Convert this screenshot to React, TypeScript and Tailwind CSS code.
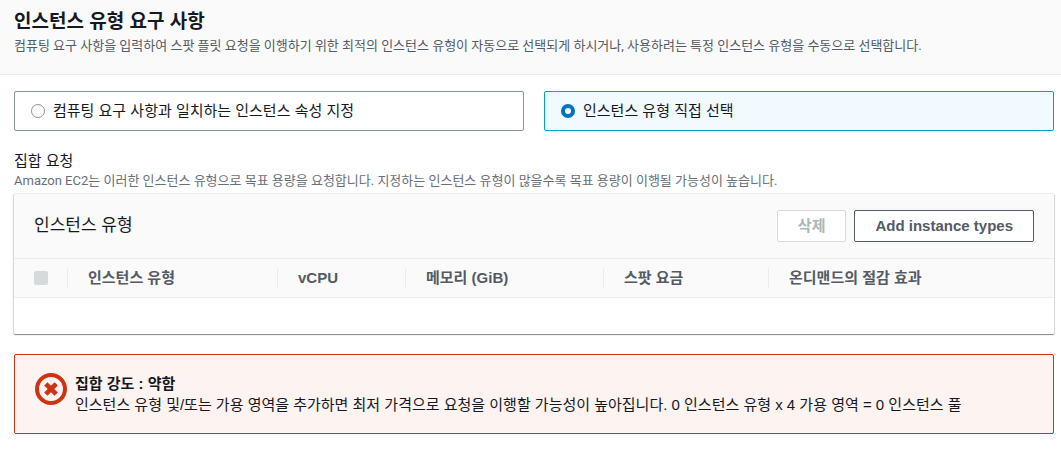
import React, { useState } from "react";
import clsx from "clsx";

const columns = [
  { label: "인스턴스 유형", width: "w-[210px]" },
  { label: "vCPU", width: "w-[128px]" },
  { label: "메모리 (GiB)", width: "w-[198px]" },
  { label: "스팟 요금", width: "w-[165px]" },
  { label: "온디맨드의 절감 효과", width: "" },
];

const options = [
  { value: "attributes", label: "컴퓨팅 요구 사항과 일치하는 인스턴스 속성 지정" },
  { value: "manual", label: "인스턴스 유형 직접 선택" },
];

const ErrorIcon = () => (
  <svg viewBox="0 0 32 32" className="size-8 shrink-0" fill="none" stroke="#d13212" strokeWidth="4" aria-hidden="true">
    <circle cx="16" cy="16" r="14" />
    <path d="M10.8 10.8l10.4 10.4M21.2 10.8l-10.4 10.4" strokeWidth="4.6" />
  </svg>
);

const SelectionMode = () => {
  const [mode, setMode] = useState("manual");

  return (
    <div className="grid grid-cols-2 gap-5">
      {options.map((option) => (
        <label
          key={option.value}
          className={clsx(
            "flex h-10 items-center gap-2 rounded-[2px] border px-4 leading-5",
            mode === option.value
              ? "border-[#00a1c9] bg-[#f1faff]"
              : "border-[#879596] bg-white"
          )}
        >
          <input
            type="radio"
            name="mode"
            value={option.value}
            checked={mode === option.value}
            onChange={() => setMode(option.value)}
            className="size-3.5 shrink-0 appearance-none rounded-full border border-[#879596] bg-white checked:border-4 checked:border-[#0073bb]"
          />
          {option.label}
        </label>
      ))}
    </div>
  );
};

const InstanceTable = () => (
  <div className="rounded-[1px] border-t border-[#eaeded] bg-white shadow-[0_1px_1px_0_rgba(0,28,36,0.3),1px_1px_1px_0_rgba(0,28,36,0.15),-1px_1px_1px_0_rgba(0,28,36,0.15)]">
    <div className="flex h-16 items-center justify-between bg-[#fafafa] px-5">
      <h3 className="text-[17px] leading-6">인스턴스 유형</h3>
      <div className="flex gap-2">
        <button
          type="button"
          disabled
          className="h-8 rounded-[2px] border border-[#d5dbdb] bg-white px-5 font-bold text-[#aab7b8]"
        >
          삭제
        </button>
        <button
          type="button"
          className="h-8 rounded-[2px] border border-[#545b64] bg-white px-5 font-bold text-[#545b64]"
        >
          Add instance types
        </button>
      </div>
    </div>
    <table className="w-full table-fixed">
      <thead>
        <tr className="h-[39px] border-y border-[#eaeded] bg-[#fafafa] text-left text-[#545b64]">
          <th className="w-[54px] pl-5">
            <input
              type="checkbox"
              disabled
              aria-label="모두 선택"
              className="block size-3.5 appearance-none rounded-[2px] bg-[#d5dbdb]"
            />
          </th>
          {columns.map((column) => (
            <th key={column.label} className={column.width}>
              <div className="-ml-px border-l border-[#eaeded] pl-5 leading-5">
                {column.label}
              </div>
            </th>
          ))}
        </tr>
      </thead>
      <tbody>
        <tr className="h-9">
          <td colSpan={6} />
        </tr>
      </tbody>
    </table>
  </div>
);

const App = () => {
  return (
    <main className="bg-white pb-4 font-['Liberation_Sans','Noto_Sans_CJK_KR',sans-serif] text-[15px] text-[#16191f]">
      <header className="border-b border-[#eaeded] bg-[#fafafa] px-3.5 pt-2.5 pb-4">
        <h2 className="text-[19px] leading-6 font-bold">인스턴스 유형 요구 사항</h2>
        <p className="font-[Roboto,'Noto_Sans_CJK_KR',sans-serif] text-[13px] leading-6 text-[#545b64]">
          컴퓨팅 요구 사항을 입력하여 스팟 플릿 요청을 이행하기 위한 최적의 인스턴스 유형이 자동으로 선택되게 하시거나, 사용하려는 특정 인스턴스 유형을 수동으로 선택합니다.
        </p>
      </header>
      <div className="pt-4 pr-[7px] pl-3.5">
        <SelectionMode />
        <section className="mt-5">
          <h3 className="leading-5">집합 요청</h3>
          <p className="mb-0.5 font-[Roboto,'Noto_Sans_CJK_KR',sans-serif] text-[13px] leading-5 text-[#687078]">
            Amazon EC2는 이러한 인스턴스 유형으로 목표 용량을 요청합니다. 지정하는 인스턴스 유형이 많을수록 목표 용량이 이행될 가능성이 높습니다.
          </p>
          <InstanceTable />
        </section>
        <div
          role="alert"
          className="mt-5 flex items-start gap-2 rounded-[2px] border border-[#d13212] bg-[#fdf3f1] px-5 py-[18px] leading-[21px]"
        >
          <ErrorIcon />
          <div>
            <p className="font-bold">집합 강도 : 약함</p>
            <p>
              인스턴스 유형 및/또는 가용 영역을 추가하면 최저 가격으로 요청을 이행할 가능성이 높아집니다. 0 인스턴스 유형 x 4 가용 영역 = 0 인스턴스 풀
            </p>
          </div>
        </div>
      </div>
    </main>
  );
};

export default App;
